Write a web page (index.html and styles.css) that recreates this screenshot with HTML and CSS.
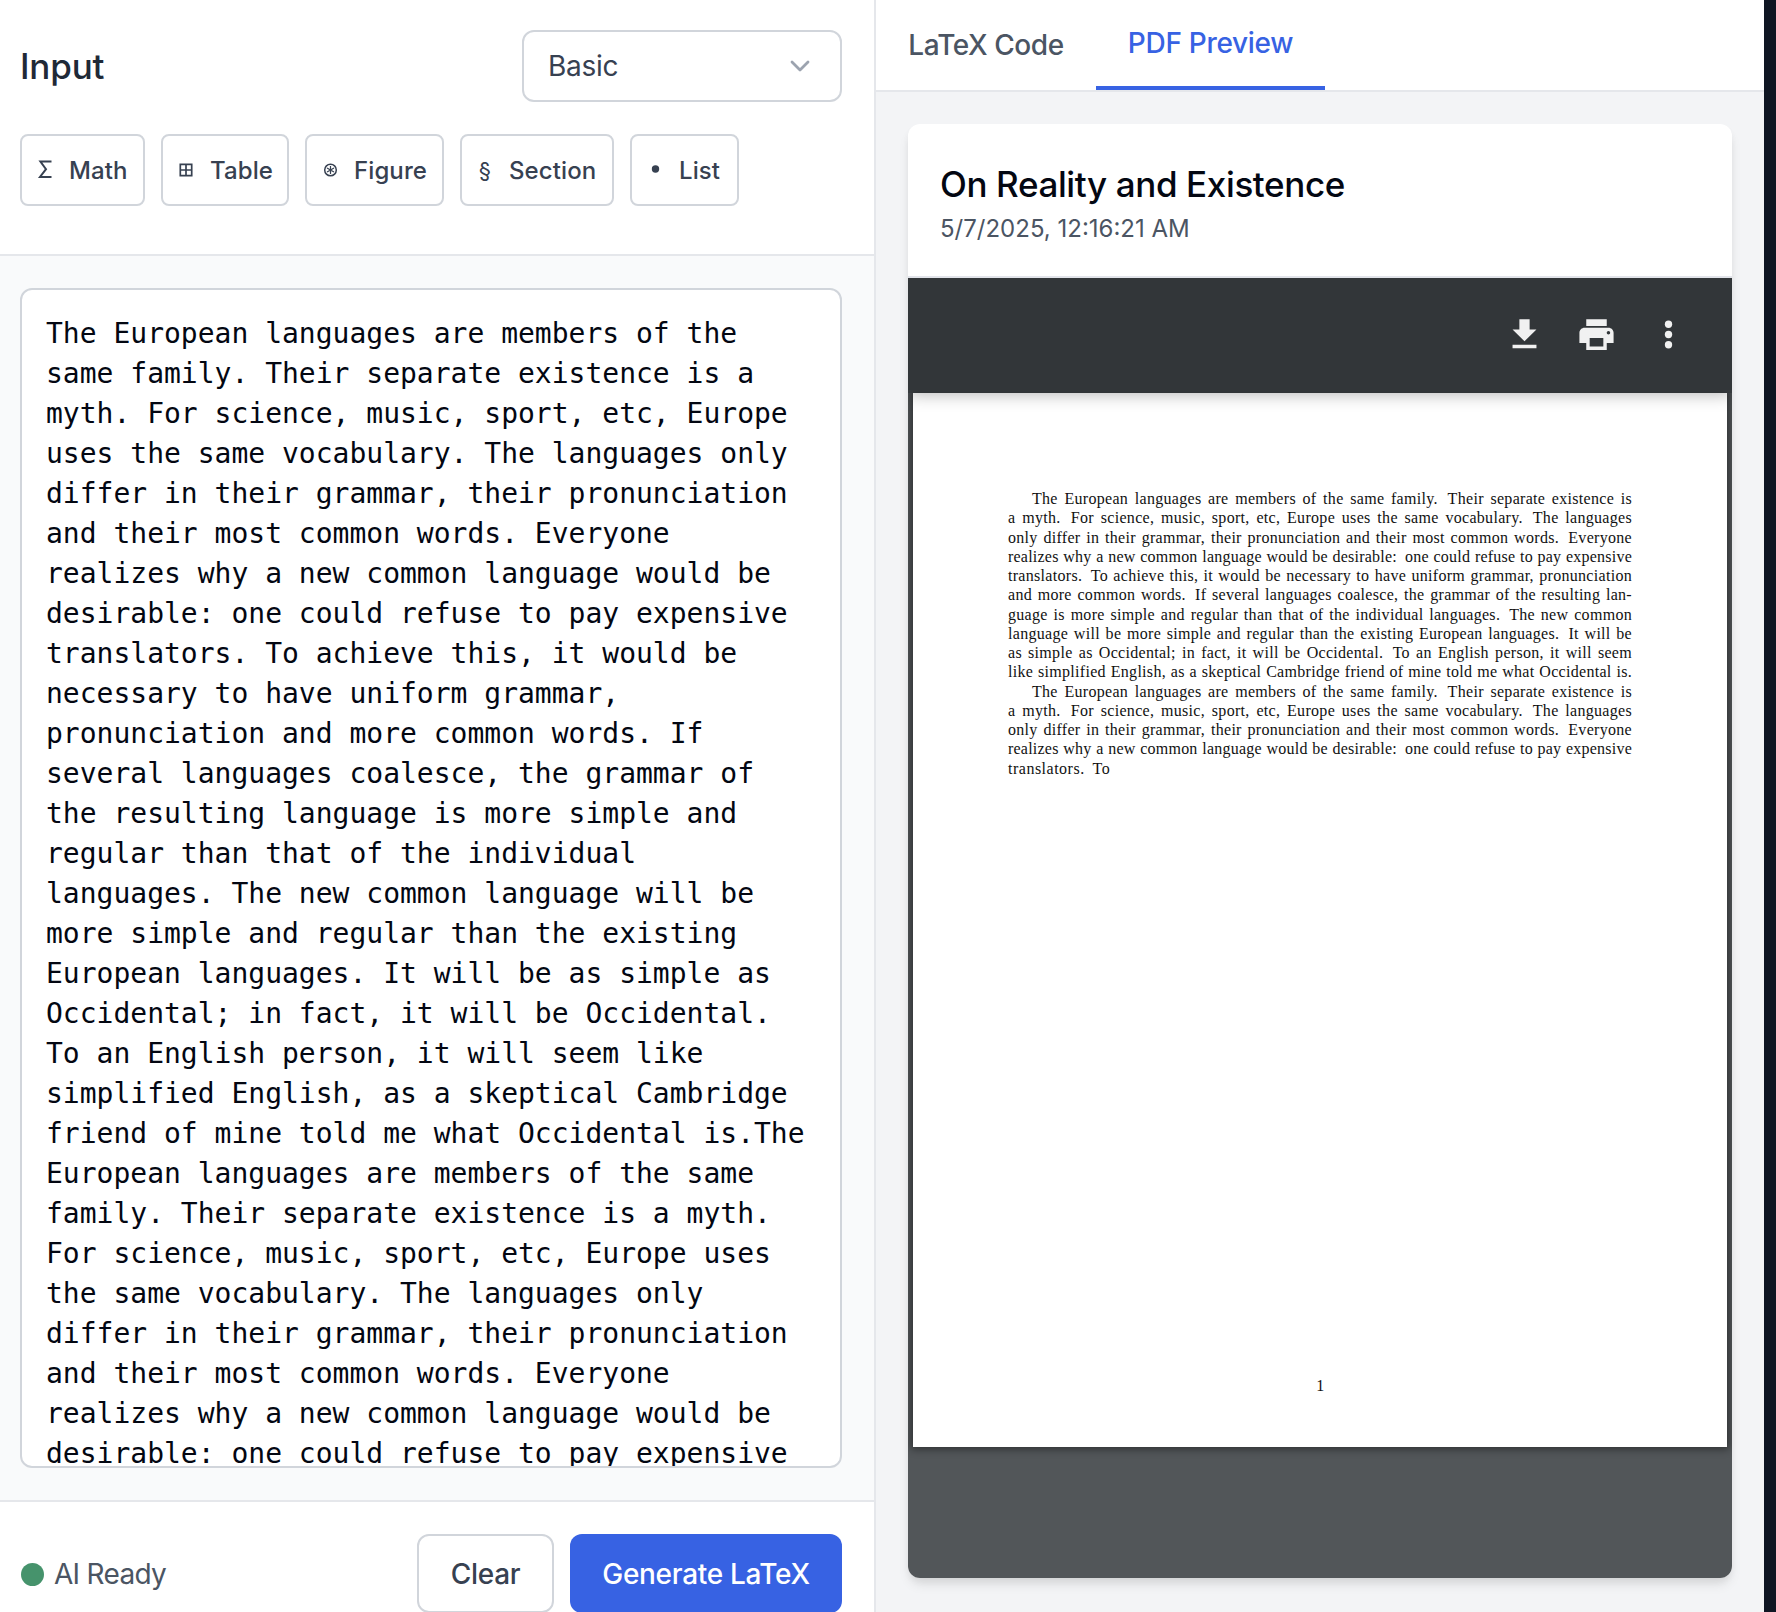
FILE: index.html
```html
<!DOCTYPE html>
<html lang="en">
<head>
<meta charset="utf-8">
<title>LaTeX Generator</title>
<link rel="stylesheet" href="styles.css">
</head>
<body>
<main class="app">
  <section class="input-panel">
    <header class="input-header">
      <div class="title-row">
        <h2 class="panel-title">Input</h2>
        <div class="select"><span>Basic</span>
          <svg class="chevron" width="20" height="12" viewBox="0 0 20 12"><path d="M2 2l8 8 8-8" fill="none" stroke="#9ca3af" stroke-width="2.8" stroke-linecap="round" stroke-linejoin="round"/></svg>
        </div>
      </div>
      <div class="tools">
        <button class="tool tool-math"><svg class="tool-icon" viewBox="0 0 16 22"><path d="M14.500 3.500H3.400l5.600 7.700-6 7.800h11.500" fill="none" stroke="currentColor" stroke-width="2"/></svg><span>Math</span></button>
        <button class="tool tool-table"><svg class="tool-icon" viewBox="0 0 16 22"><path d="M2.300 6.300h11.400v11.400H2.300zM8 6.300v11.400M2.300 12h11.400" fill="none" stroke="currentColor" stroke-width="1.700"/></svg><span>Table</span></button>
        <button class="tool tool-figure"><svg class="tool-icon" viewBox="0 0 16 22"><g fill="none" stroke="currentColor" stroke-width="1.500"><circle cx="8.500" cy="12" r="5.800"/><path d="M8.500 8v8M5 10l7 4M12 10l-7 4" stroke-width="1.200"/></g></svg><span>Figure</span></button>
        <button class="tool tool-section"><span class="tool-glyph">§</span><span>Section</span></button>
        <button class="tool tool-list"><svg class="tool-icon" viewBox="0 0 16 22"><circle cx="8.500" cy="11" r="3.700" fill="currentColor"/></svg><span>List</span></button>
      </div>
    </header>
    <div class="editor">
      <textarea class="source" spellcheck="false">The European languages are members of the same family. Their separate existence is a myth. For science, music, sport, etc, Europe uses the same vocabulary. The languages only differ in their grammar, their pronunciation and their most common words. Everyone realizes why a new common language would be desirable: one could refuse to pay expensive translators. To achieve this, it would be necessary to have uniform grammar, pronunciation and more common words. If several languages coalesce, the grammar of the resulting language is more simple and regular than that of the individual languages. The new common language will be more simple and regular than the existing European languages. It will be as simple as Occidental; in fact, it will be Occidental. To an English person, it will seem like simplified English, as a skeptical Cambridge friend of mine told me what Occidental is.The European languages are members of the same family. Their separate existence is a myth. For science, music, sport, etc, Europe uses the same vocabulary. The languages only differ in their grammar, their pronunciation and their most common words. Everyone realizes why a new common language would be desirable: one could refuse to pay expensive</textarea>
    </div>
    <footer class="input-footer">
      <div class="status"><i class="dot"></i><span>AI Ready</span></div>
      <div class="actions">
        <button class="btn btn-clear"><span>Clear</span></button>
        <button class="btn btn-generate"><span>Generate LaTeX</span></button>
      </div>
    </footer>
  </section>
  <section class="output-panel">
    <nav class="tabs">
      <div class="tab tab-code"><span>LaTeX Code</span></div>
      <div class="tab tab-pdf"><span>PDF Preview</span></div>
    </nav>
    <div class="preview">
      <article class="card">
        <header class="card-header">
          <h3 class="doc-title"><span>On Reality and Existence</span></h3>
          <p class="doc-date"><span>5/7/2025, 12:16:21 AM</span></p>
        </header>
        <div class="viewer">
          <div class="viewer-bar">
            <svg class="bar-icon" viewBox="0 0 24 24"><path d="M19 9h-4V3H9v6H5l7 7 7-7zM5 18v2h14v-2H5z"/></svg>
            <svg class="bar-icon" viewBox="0 0 24 24"><path d="M19 8H5c-1.660 0-3 1.340-3 3v6h4v4h12v-4h4v-6c0-1.660-1.340-3-3-3zm-3 11H8v-5h8v5zm3-7c-.550 0-1-.450-1-1s.450-1 1-1 1 .450 1 1-.450 1-1 1zm-1-9H6v4h12V3z"/></svg>
            <svg class="bar-icon" viewBox="0 0 24 24"><circle cx="12" cy="6" r="2.150"/><circle cx="12" cy="12" r="2.150"/><circle cx="12" cy="18" r="2.150"/></svg>
          </div>
          <div class="page">
            <div class="page-text">
              <p class="ln indent">The European languages are members of the same family.&thinsp; Their separate existence is</p>
              <p class="ln">a myth.&thinsp; For science, music, sport, etc, Europe uses the same vocabulary.&thinsp; The languages</p>
              <p class="ln">only differ in their grammar, their pronunciation and their most common words.&thinsp; Everyone</p>
              <p class="ln tight">realizes why a new common language would be desirable:&thinsp; one could refuse to pay expensive</p>
              <p class="ln">translators.&thinsp; To achieve this, it would be necessary to have uniform grammar, pronunciation</p>
              <p class="ln">and more common words.&thinsp; If several languages coalesce, the grammar of the resulting lan-</p>
              <p class="ln">guage is more simple and regular than that of the individual languages.&thinsp; The new common</p>
              <p class="ln">language will be more simple and regular than the existing European languages.&thinsp; It will be</p>
              <p class="ln">as simple as Occidental; in fact, it will be Occidental.&thinsp; To an English person, it will seem</p>
              <p class="ln">like simplified English, as a skeptical Cambridge friend of mine told me what Occidental is.</p>
              <p class="ln indent">The European languages are members of the same family.&thinsp; Their separate existence is</p>
              <p class="ln">a myth.&thinsp; For science, music, sport, etc, Europe uses the same vocabulary.&thinsp; The languages</p>
              <p class="ln">only differ in their grammar, their pronunciation and their most common words.&thinsp; Everyone</p>
              <p class="ln tight">realizes why a new common language would be desirable:&thinsp; one could refuse to pay expensive</p>
              <p class="ln last">translators.&thinsp; To</p>
            </div>
            <div class="page-number">1</div>
          </div>
        </div>
      </article>
    </div>
  </section>
</main>
</body>
</html>
```
FILE: styles.css
```css
* { box-sizing: border-box; margin: 0; padding: 0; }
body {
  width: 1776px;
  height: 1612px;
  overflow: hidden;
  background: #0f1623;
  font-family: Inter, "Liberation Sans", sans-serif;
  font-size: 28px;
  letter-spacing: -0.3px;
  color: #374151;
}
button { font: inherit; letter-spacing: inherit; color: inherit; background: #fff; }
.app { display: flex; width: 1764px; height: 1612px; }

.input-panel {
  display: flex;
  flex-direction: column;
  width: 876px;
  border-right: 2px solid #e5e7eb;
  background: #fff;
}
.input-header { height: 256px; padding: 30px 32px 0 20px; border-bottom: 2px solid #e5e7eb; }
.title-row { display: flex; justify-content: space-between; align-items: center; height: 72px; }
.panel-title { font-size: 35px; font-weight: 500; color: #1f2937; letter-spacing: -0.2px; }
.select {
  display: flex;
  align-items: center;
  justify-content: space-between;
  width: 320px;
  height: 72px;
  padding: 0 30px 0 24px;
  border: 2px solid #d1d5db;
  border-radius: 12px;
}
.tools { display: flex; gap: 16px; margin-top: 32px; }
.tool {
  display: flex;
  align-items: center;
  gap: 16px;
  height: 72px;
  padding-left: 15px;
  border: 2px solid #d1d5db;
  border-radius: 8px;
  font-size: 24px;
  font-weight: 500;
  letter-spacing: 0.1px;
}
.tool-icon { width: 16px; height: 22px; margin-bottom: 2px; }
.tool-glyph { width: 16px; text-align: center; font-weight: 400; font-size: 22px; }
.tool-math { width: 125px; }
.tool-table { width: 128px; }
.tool-figure { width: 139px; }
.tool-section { width: 154px; }
.tool-list { width: 109px; }

.editor { height: 1244px; padding: 32px 32px 32px 20px; background: #f9fafb; }
.source {
  display: block;
  width: 822px;
  height: 1180px;
  padding: 24px 24px 0;
  border: 2px solid #d1d5db;
  border-radius: 12px;
  overflow: hidden;
  resize: none;
  background: #fff;
  color: #030712;
  font: 28px/40px "DejaVu Sans Mono", monospace;
  letter-spacing: 0;
}
.input-footer {
  display: flex;
  justify-content: space-between;
  height: 112px;
  padding: 32px 32px 0 21px;
  border-top: 2px solid #e5e7eb;
}
.status {
  display: flex;
  align-items: center;
  gap: 10px;
  height: 80px;
  color: #4b5563;
  letter-spacing: -0.7px;
}
.dot { width: 23px; height: 23px; border-radius: 50%; background: #46936c; }
.actions { display: flex; gap: 16px; }
.btn { height: 79px; border-radius: 12px; font-weight: 500; }
.btn-clear { width: 137px; border: 2px solid #d1d5db; }
.btn-generate { width: 272px; border: 0; background: #3762e3; color: #fff; }

.output-panel { width: 888px; background: #f3f4f6; }
.tabs {
  display: flex;
  height: 92px;
  background: #fff;
  border-bottom: 2px solid #e5e7eb;
  color: #4b5563;
  font-weight: 500;
}
.tab { display: flex; align-items: center; justify-content: center; height: 90px; white-space: nowrap; }
.tab-code { width: 220px; letter-spacing: -0.45px; }
.tab-pdf { width: 229px; border-bottom: 4px solid #3762e3; color: #3762e3; }
.preview { padding: 32px; }
.card {
  height: 1454px;
  border-radius: 12px;
  overflow: hidden;
  background: #fff;
  box-shadow: 0 8px 12px -2px rgba(0, 0, 0, 0.1), 0 4px 8px -2px rgba(0, 0, 0, 0.06);
}
.card-header { height: 154px; padding: 37px 32px 0; border-bottom: 2px solid #e2e4ea; }
.doc-title { font-size: 35px; line-height: 46px; font-weight: 500; color: #030712; letter-spacing: -0.38px; }
.doc-date { margin-top: 5px; font-size: 24px; line-height: 34px; color: #4b5563; letter-spacing: 0; }
.viewer { height: 1300px; overflow: hidden; background: #525659; }
.viewer-bar {
  position: relative;
  z-index: 1;
  display: flex;
  justify-content: flex-end;
  align-items: center;
  gap: 31px;
  height: 112px;
  padding: 0 43.5px 0 0;
  background: #323639;
  box-shadow: 0 3px 0 rgba(50, 54, 57, 0.7), 0 4px 16px rgba(0, 0, 0, 0.3);
}
.bar-icon { width: 41px; height: 41px; fill: #f1f1f1; }
.page {
  display: flex;
  flex-direction: column;
  justify-content: space-between;
  height: 1054px;
  margin: 3px 5px 0;
  padding: 96px 95px 52px;
  background: #fff;
  box-shadow: 0 0 8px 2px rgba(0, 0, 0, 0.45);
  color: #111;
  font-family: "Liberation Serif", serif;
  font-size: 16px;
  line-height: 19.25px;
}
.ln { white-space: nowrap; text-align-last: justify; letter-spacing: 0.3px; }
.indent { padding-left: 24px; }
.tight { letter-spacing: 0.22px; }
.last { text-align-last: left; letter-spacing: 0.5px; }
.page-number { text-align: center; }
```
